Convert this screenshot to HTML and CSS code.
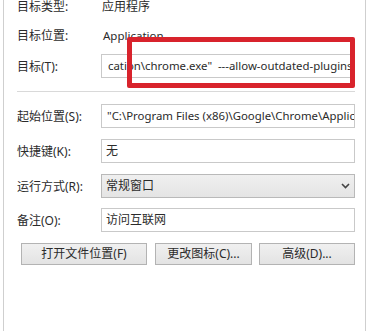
FILE: index.html
```html
<!DOCTYPE html>
<html lang="zh-CN">
<head>
<meta charset="utf-8">
<title>属性 - 快捷方式</title>
<link rel="stylesheet" href="styles.css">
</head>
<body>
<div class="panel">
  <div class="info-row first"><span class="label">目标类型:</span><span class="value">应用程序</span></div>
  <div class="info-row second"><span class="label">目标位置:</span><span class="value latin">Application</span></div>
  <div class="field-row target"><span class="label">目标(T):</span><div class="input latin tgt">cation\chrome.exe"&nbsp; ---allow-outdated-plugins<span class="caret"></span></div></div>
  <div class="separator"></div>
  <div class="field-row start"><span class="label">起始位置(S):</span><div class="input latin">"C:\Program Files (x86)\Google\Chrome\Applic</div></div>
  <div class="field-row"><span class="label">快捷键(K):</span><div class="input">无</div></div>
  <div class="field-row"><span class="label">运行方式(R):</span><div class="select"><span>常规窗口</span><svg class="chev" width="9" height="6" viewBox="0 0 9 6"><polyline points="1,1 4.5,4.5 8,1" fill="none" stroke="#444" stroke-width="1.6"/></svg></div></div>
  <div class="field-row last"><span class="label">备注(O):</span><div class="input">访问互联网</div></div>
  <div class="buttons">
    <div class="btn b1">打开文件位置(F)</div>
    <div class="btn b2">更改图标(C)...</div>
    <div class="btn b3">高级(D)...</div>
  </div>
  <div class="highlight"></div>
</div>
</body>
</html>
```
FILE: styles.css
```css
html, body {
  margin: 0;
  padding: 0;
  background: #ffffff;
}
body {
  width: 372px;
  height: 331px;
  overflow: hidden;
  font-family: "Noto Sans", "Noto Sans CJK SC", sans-serif;
  font-size: 12px;
  color: #2b2b2b;
}
.panel {
  position: relative;
  box-sizing: border-box;
  margin-left: 3px;
  width: 363px;
  height: 331px;
  border-left: 1px solid #cfcfcf;
  border-right: 1px solid #cfcfcf;
  padding-left: 13px;
  padding-top: 0;
}
.info-row {
  display: grid;
  grid-template-columns: 84px 1fr;
  height: 14px;
  line-height: 14px;
  white-space: nowrap;
}
.info-row.first { margin-top: 0; }
.info-row.second { margin-top: 15px; }
.info-row .value { padding-left: 1px; }
.info-row .latin { padding-left: 2px; font-size: 11.5px; }
.field-row {
  display: grid;
  grid-template-columns: 84px 254px;
  align-items: center;
  height: 24px;
  margin-top: 11px;
  white-space: nowrap;
}
.field-row.target { margin-top: 11px; }
.field-row.start { margin-top: 12px; }
.field-row.last { margin-top: 10px; }
.input {
  box-sizing: border-box;
  height: 24px;
  line-height: 22px;
  border: 1px solid #c9c9c9;
  background: #fff;
  padding: 0 4px;
  overflow: hidden;
  position: relative;
}
.input.latin { font-size: 11.4px; padding-left: 5px; }
.input.tgt { padding-left: 6px; }
.caret {
  display: inline-block;
  width: 1px;
  height: 15px;
  background: #222;
  vertical-align: -3px;
}
.select {
  box-sizing: border-box;
  height: 24px;
  line-height: 22px;
  border: 1px solid #b9b9b9;
  background: linear-gradient(#efefef, #e4e4e4);
  padding: 0 4px 0 4px;
  display: flex;
  justify-content: space-between;
  align-items: center;
}
.chev { margin-right: 0; }
.separator {
  height: 1px;
  background: #d9d9d9;
  margin-top: 13px;
  width: 338px;
}
.buttons {
  display: flex;
  gap: 8px;
  margin-top: 11px;
  padding-left: 4px;
}
.btn {
  box-sizing: border-box;
  height: 22px;
  line-height: 20px;
  border: 1px solid #b3b3b3;
  background: linear-gradient(#f0f0f0, #e3e3e3);
  text-align: center;
  white-space: nowrap;
}
.b1 { width: 126px; }
.b2 { width: 97px; }
.b3 { width: 96px; margin-left: -1px; }
.highlight {
  position: absolute;
  left: 123px;
  top: 37px;
  width: 228px;
  height: 51px;
  box-sizing: border-box;
  border: 5px solid #d8232c;
  border-radius: 2px;
}
```
